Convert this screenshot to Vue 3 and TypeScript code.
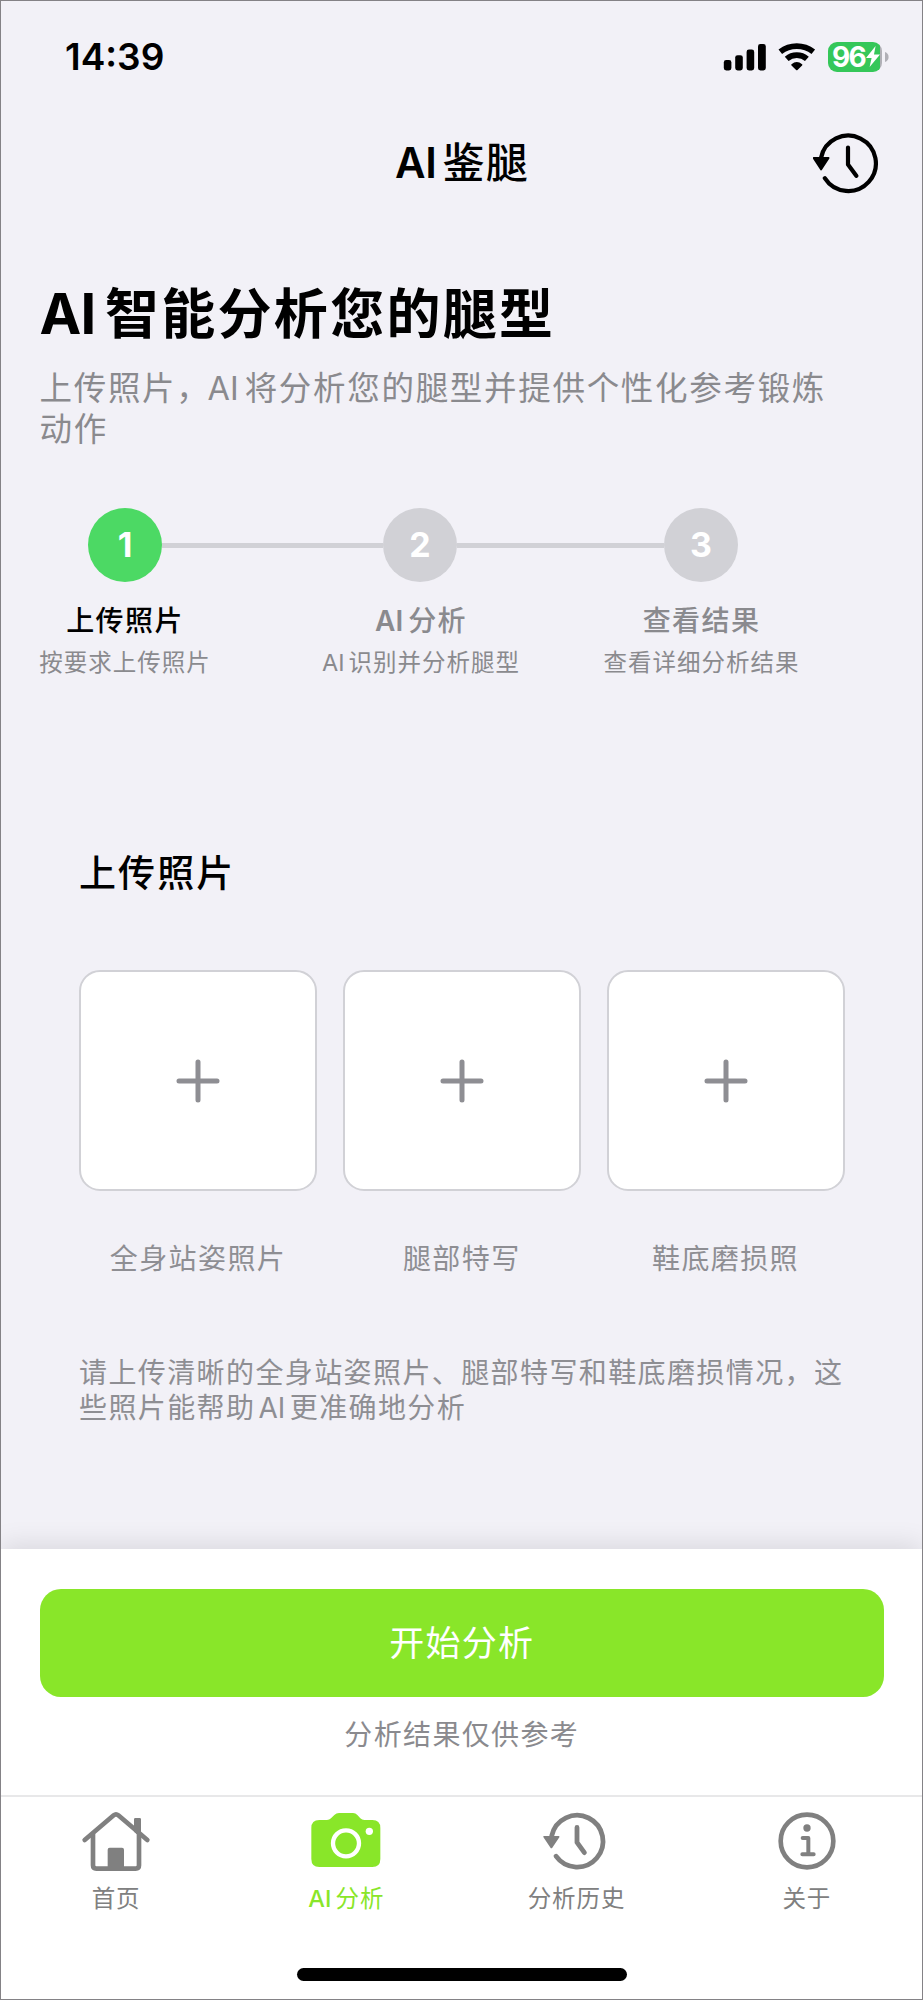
<script setup lang="ts">
interface Step {
  latin?: string
  title: string
  noteLatin?: string
  note: string
}
interface Tab {
  id: 'home' | 'camera' | 'history' | 'about'
  latin?: string
  label: string
}

const activeStep = 0
const activeTab = 'camera'

const steps: Step[] = [
  { title: '上传照片', note: '按要求上传照片' },
  { latin: 'AI', title: '分析', noteLatin: 'AI', note: '识别并分析腿型' },
  { title: '查看结果', note: '查看详细分析结果' },
]
const photos: string[] = ['全身站姿照片', '腿部特写', '鞋底磨损照']
const tabs: Tab[] = [
  { id: 'home', label: '首页' },
  { id: 'camera', latin: 'AI', label: '分析' },
  { id: 'history', label: '分析历史' },
  { id: 'about', label: '关于' },
]
</script>

<template>
  <div class="phone">
    <div class="status">
      <span class="time">14:39</span>
      <div class="indicators">
        <svg class="signal" width="44" height="28" viewBox="0 0 44 28">
          <rect x="0.8" y="17" width="7.6" height="10.4" rx="2.4" />
          <rect x="12.2" y="12.2" width="7.6" height="15.2" rx="2.4" />
          <rect x="23.6" y="6.6" width="7.6" height="20.8" rx="2.4" />
          <rect x="35" y="1" width="7.8" height="26.4" rx="2.4" />
        </svg>
        <svg class="wifi" width="38" height="28" viewBox="0 0 38 28">
          <path d="M2.3 8.8 A27 27 0 0 1 35.3 8.8" />
          <path d="M8.7 15.9 A15.4 15.4 0 0 1 28.9 15.9" />
          <path class="dot" d="M13.5 21.2 Q18.8 17 24.1 21.2 Q24.7 21.8 24.1 22.4 L19.5 27 Q18.8 27.6 18.1 27 L13.5 22.4 Q12.9 21.8 13.5 21.2Z" />
        </svg>
        <div class="battery">
          <span class="level">96</span>
          <svg width="14" height="21" viewBox="0 0 14 21"><path d="M9.6 0 L0 12 H5.6 L3.6 21 L14 8.4 H8 Z" /></svg>
        </div>
        <svg class="nub" width="4" height="10" viewBox="0 0 4 10"><path d="M0 0 Q3.6 1.4 3.6 5 T0 10Z" /></svg>
      </div>
    </div>

    <header class="navbar">
      <h1><span class="latin">AI</span>鉴腿</h1>
      <svg class="history-button" width="70" height="64" viewBox="-35 -32 70 64">
        <path class="line" d="M-27 -5 A27.7 27.7 0 1 1 -23.2 15.2 M0 -15.5 V1.6 L8.3 12.8" />
        <path d="M-34.4 -5 H-19.4 L-26.9 6.6Z" class="tip" />
      </svg>
    </header>

    <main>
      <section class="intro">
        <h2><span class="latin">AI</span>智能分析您的腿型</h2>
        <p>上传照片，<span class="latin">AI</span>将分析您的腿型并提供个性化参考锻炼<br />动作</p>
      </section>

      <section class="steps">
        <div class="track">
          <template v-for="(step, i) in steps" :key="step.title">
            <i v-if="i > 0" class="rail" :class="{ short: i === 2 }"></i>
            <b class="bullet" :class="{ active: i === activeStep }">{{ i + 1 }}</b>
          </template>
        </div>
        <div class="captions">
          <div v-for="(step, i) in steps" :key="step.title" class="caption" :class="{ active: i === activeStep }">
            <strong><span v-if="step.latin" class="latin">{{ step.latin }}</span>{{ step.title }}</strong>
            <small><span v-if="step.noteLatin" class="latin">{{ step.noteLatin }}</span>{{ step.note }}</small>
          </div>
        </div>
      </section>

      <section class="upload">
        <h3>上传照片</h3>
        <div class="photos">
          <div v-for="photo in photos" :key="photo" class="photo">
            <div class="slot">
              <svg width="44" height="44" viewBox="-22 -22 44 44"><path d="M-19 0 H19 M0 -19 V19" /></svg>
            </div>
            <span>{{ photo }}</span>
          </div>
        </div>
        <p class="hint">请上传清晰的全身站姿照片、腿部特写和鞋底磨损情况，这<br />些照片能帮助<span class="latin mid">AI</span>更准确地分析</p>
      </section>
    </main>

    <section class="action">
      <button type="button">开始分析</button>
      <p>分析结果仅供参考</p>
    </section>

    <nav class="tabs">
      <div v-for="tab in tabs" :key="tab.id" class="tab" :class="{ active: tab.id === activeTab }">
        <svg v-if="tab.id === 'home'" width="70" height="64" viewBox="-105 -96 210 192">
          <path class="home-line" d="M-94 -3 L-7 -77 Q0 -83 7 -77 L94 -3" stroke-width="14" />
          <path class="home-line" d="M-69 -20 V73 Q-69 83 -59 83 H59 Q69 83 69 73 V-20" stroke-width="14" />
          <path d="M54 -65 Q54 -69 58 -69 H71 Q75 -69 75 -65 V-10 L54 -28Z M-25 84 V26 Q-25 20 -19 20 H18 Q24 20 24 26 V84Z" />
        </svg>
        <svg v-else-if="tab.id === 'camera'" width="70" height="64" viewBox="-105 -96 210 192">
          <path d="M-80 -63 H-57 Q-50 -63 -45 -68 L-35 -78 Q-29 -84 -21 -84 H21 Q29 -84 34 -78 L43 -68 Q48 -63 55 -63 H79 Q103 -63 103 -39 V54 Q103 78 79 78 H-80 Q-104 78 -104 54 V-39 Q-104 -63 -80 -63Z" />
          <circle class="lens" cx="0" cy="7" r="39" />
          <circle class="flash" cx="70" cy="-29" r="11" />
        </svg>
        <svg v-else-if="tab.id === 'history'" width="70" height="64" viewBox="-35 -32 70 64">
          <path class="line" d="M-25.2 -5.4 A25.9 25.9 0 1 1 -21 15.2 M0 -13.6 V1.4 L7.4 11.6" />
          <path class="tip" d="M-32.8 -4.2 H-18.4 L-25.6 6.4Z" />
        </svg>
        <svg v-else width="70" height="64" viewBox="-105 -96 210 192">
          <circle class="ring" cx="0" cy="0" r="79" />
          <circle cx="0" cy="-39" r="11" />
          <path class="serif" d="M-13 -9 H4 V40 M-14 40 H20" />
        </svg>
        <span><span v-if="tab.latin" class="latin">{{ tab.latin }}</span>{{ tab.label }}</span>
      </div>
    </nav>
    <div class="home-bar"></div>
  </div>
</template>

<style>
body {
  margin: 0;
}
</style>

<style scoped>
* {
  box-sizing: border-box;
}
h1,
h2,
h3,
p {
  margin: 0;
}
.phone {
  width: 923px;
  height: 2000px;
  border: 1px solid #848286;
  background: #f2f1f7;
  color: #000;
  font-family: Inter, 'Noto Sans CJK SC', sans-serif;
  display: flex;
  flex-direction: column;
  overflow: hidden;
  white-space: nowrap;
}
.latin {
  letter-spacing: 0;
}
.status {
  height: 113px;
  padding: 0 33px 2px 64px;
  display: flex;
  align-items: center;
  justify-content: space-between;
}
.time {
  font-size: 37px;
  font-weight: 600;
}
.indicators {
  display: flex;
  align-items: center;
}
.wifi {
  margin-left: 11px;
}
.wifi path {
  fill: none;
  stroke: #000;
  stroke-width: 5.8;
}
.wifi .dot {
  fill: #000;
  stroke: none;
}
.battery {
  width: 54px;
  height: 30px;
  margin-left: 12px;
  padding-left: 4px;
  border-radius: 9px;
  background: linear-gradient(90deg, #35c759 52px, #b0b0b6 52px);
  color: #fff;
  display: flex;
  align-items: center;
}
.battery svg {
  fill: #fff;
  margin-left: 1px;
}
.level {
  width: 33px;
  font-size: 28px;
  font-weight: 700;
  line-height: 30px;
  letter-spacing: -1.8px;
}
.nub {
  margin-left: 3px;
  fill: #b0b0b6;
}
.navbar {
  height: 98px;
  padding: 0 39px 0 110px;
  display: flex;
  align-items: center;
  justify-content: space-between;
}
.navbar h1 {
  flex: 1;
  text-align: center;
  font-size: 42px;
  font-weight: 500;
  line-height: 50px;
  letter-spacing: 1.2px;
}
.navbar .latin {
  font-weight: 600;
  letter-spacing: -0.3px;
  margin-right: 6px;
}
.line {
  fill: none;
  stroke: #000;
  stroke-width: 4.2;
  stroke-linecap: round;
  stroke-linejoin: round;
}
.tip {
  stroke: #000;
  stroke-width: 1.8;
  stroke-linejoin: round;
}
main {
  height: 1337px;
  padding: 72px 39px 0 38.5px;
}
.intro h2 {
  font-size: 54px;
  font-weight: 700;
  line-height: 60px;
  letter-spacing: 2.3px;
}
.intro h2 .latin {
  font-size: 56px;
  letter-spacing: -0.8px;
  margin-right: 9.5px;
}
.intro p {
  margin-top: 23px;
  font-size: 32.5px;
  line-height: 41px;
  letter-spacing: 1.7px;
  color: #8a8a8e;
}
.intro p .latin {
  margin: 0 6px 0 -3px;
}
.track {
  margin: 58px 0 0 48.5px;
  display: flex;
  align-items: center;
}
.bullet {
  width: 74px;
  height: 74px;
  border-radius: 50%;
  background: #d1d1d6;
  color: #fff;
  font-size: 34px;
  font-weight: 700;
  line-height: 74px;
  text-align: center;
}
.bullet.active {
  background: #4cd964;
}
.rail {
  width: 221px;
  height: 5px;
  background: #d1d1d6;
}
.rail.short {
  width: 207px;
}
.captions {
  margin-top: 19px;
  display: flex;
  gap: 112px;
}
.caption {
  width: 171px;
  display: flex;
  flex-direction: column;
  align-items: center;
  color: #8a8a8e;
}
.caption:nth-child(2) {
  width: 197px;
}
.caption:nth-child(3) {
  width: 194px;
  margin-left: -27px;
}
.caption strong {
  font-size: 28px;
  font-weight: 500;
  line-height: 40px;
  letter-spacing: 1.4px;
}
.caption strong .latin {
  font-weight: 600;
  margin-right: 5px;
}
.caption small {
  margin-top: 4px;
  font-size: 23.5px;
  line-height: 36px;
  letter-spacing: 1px;
}
.caption small .latin {
  margin-right: 4px;
}
.caption.active strong {
  color: #000;
}
.upload {
  margin: 169px 38.5px 0 39.5px;
}
.upload h3 {
  font-size: 37px;
  font-weight: 500;
  line-height: 48px;
  letter-spacing: 2.1px;
}
.photos {
  margin-top: 72px;
  display: flex;
  justify-content: space-between;
}
.photo {
  width: 238px;
  display: flex;
  flex-direction: column;
  align-items: center;
  color: #8e8e93;
}
.slot {
  width: 100%;
  height: 221px;
  border: 2px solid #d1d1d6;
  border-radius: 21px;
  background: #fff;
  display: flex;
  align-items: center;
  justify-content: center;
}
.slot svg {
  fill: none;
  stroke: #8e8e93;
  stroke-width: 5;
  stroke-linecap: round;
}
.photo span {
  margin-top: 48px;
  font-size: 28px;
  line-height: 40px;
  letter-spacing: 1.4px;
}
.hint {
  margin-top: 77px;
  font-size: 28px;
  line-height: 34.5px;
  letter-spacing: 1.4px;
  color: #8e8e93;
}
.hint .mid {
  margin: 0 4.5px 0 3px;
}
.action {
  height: 248px;
  padding: 39.5px 38px 0 38.5px;
  background: #fff;
  border-bottom: 2px solid #e8e8e9;
  box-shadow: 0 -5px 24px rgba(0, 0, 0, 0.1);
  text-align: center;
}
.action button {
  display: block;
  width: 100%;
  height: 108.5px;
  padding: 0;
  border: 0;
  border-radius: 21px;
  background: #89e629;
  color: #fff;
  font-family: inherit;
  font-size: 35px;
  line-height: 108px;
  letter-spacing: 1.2px;
}
.action p {
  margin-top: 18px;
  font-size: 28px;
  line-height: 40px;
  letter-spacing: 1.35px;
  color: #8a8a8e;
}
.tabs {
  height: 171px;
  padding-top: 12px;
  background: #fff;
  display: flex;
}
.tab {
  flex: 1;
  display: flex;
  flex-direction: column;
  align-items: center;
  color: #808080;
  font-size: 23.5px;
  line-height: 36px;
  letter-spacing: 1px;
}
.tab > span {
  margin-top: 7.5px;
}
.tab .latin {
  margin-right: 4px;
  font-weight: 500;
}
.tab.active {
  color: #89e629;
}
.tab svg {
  fill: currentColor;
}
.tab .line {
  fill: none;
  stroke: currentColor;
  stroke-width: 4.8;
}
.tab .tip {
  stroke: currentColor;
}
.home-line,
.ring,
.serif {
  fill: none;
  stroke: currentColor;
  stroke-linecap: round;
  stroke-linejoin: round;
}
.ring {
  stroke-width: 14;
}
.serif {
  stroke-width: 12;
}
.lens {
  fill: none;
  stroke: #fff;
  stroke-width: 13;
}
.flash {
  fill: #fff;
}
.home-bar {
  flex: 1;
  background: #fff;
}
.home-bar::before {
  content: '';
  display: block;
  width: 330px;
  height: 12.5px;
  margin: 0 auto;
  border-radius: 7px;
  background: #000;
}
</style>
